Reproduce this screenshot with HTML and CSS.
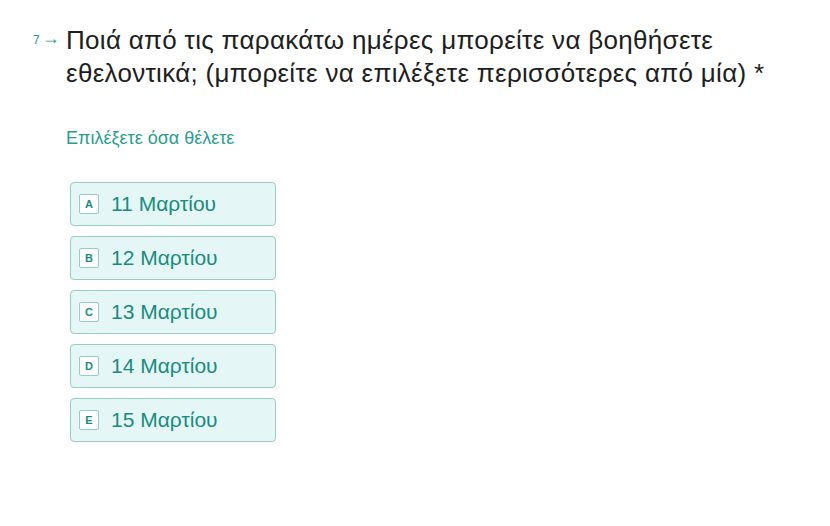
FILE: index.html
```html
<!DOCTYPE html>
<html lang="el">

<head>
    <meta charset="UTF-8">
    <title>Ερώτηση 7</title>
    <link rel="stylesheet" href="styles.css">
</head>

<body>
    <div class="question">
        <div class="num">7<span class="arrow">&#8594;</span></div>
        <div class="body">
            <h2 class="title">Ποιά από τις παρακάτω ημέρες μπορείτε να βοηθήσετε εθελοντικά; (μπορείτε να επιλέξετε περισσότερες από μία) *</h2>
            <p class="hint">Επιλέξετε όσα θέλετε</p>

            <div class="choices">
                <div class="choice"><span class="key">A</span>11 Μαρτίου</div>
                <div class="choice"><span class="key">B</span>12 Μαρτίου</div>
                <div class="choice"><span class="key">C</span>13 Μαρτίου</div>
                <div class="choice"><span class="key">D</span>14 Μαρτίου</div>
                <div class="choice"><span class="key">E</span>15 Μαρτίου</div>
            </div>
        </div>
    </div>
</body>

</html>
```

FILE: styles.css
```css
body {
    margin: 0;
    background-color: white;
    font-family: "Liberation Sans", Arial, sans-serif;
}

.question {
    display: flex;
    padding: 24px 0 0 33px;
}

.num {
    width: 33px;
    padding-top: 4px;
    font-size: 12px;
    color: #2a9d8f;
}

.arrow {
    margin-left: 2px;
    font-size: 18px;
    font-weight: bold;
}

.title {
    margin: 0;
    width: 740px;
    font-size: 26px;
    font-weight: normal;
    letter-spacing: 0.3px;
    line-height: 33px;
    color: #1e1e1e;
}

.hint {
    margin: 38px 0 0 0;
    font-size: 18px;
    color: #2a9d8f;
}

.choices {
    display: flex;
    flex-direction: column;
    gap: 10px;
    margin: 33px 0 0 4px;
}

.choice {
    display: flex;
    align-items: center;
    box-sizing: border-box;
    width: 206px;
    height: 44px;
    padding-left: 8px;
    background-color: #e4f6f5;
    border: 1px solid #98ccc5;
    border-radius: 4px;
    font-size: 21px;
    color: #1a8c7e;
}

.key {
    display: flex;
    align-items: center;
    justify-content: center;
    box-sizing: border-box;
    width: 20px;
    height: 20px;
    margin-right: 12px;
    background-color: white;
    border: 1px solid #98ccc5;
    border-radius: 2px;
    font-size: 11px;
    font-weight: bold;
    color: #1a8c7e;
}
```
